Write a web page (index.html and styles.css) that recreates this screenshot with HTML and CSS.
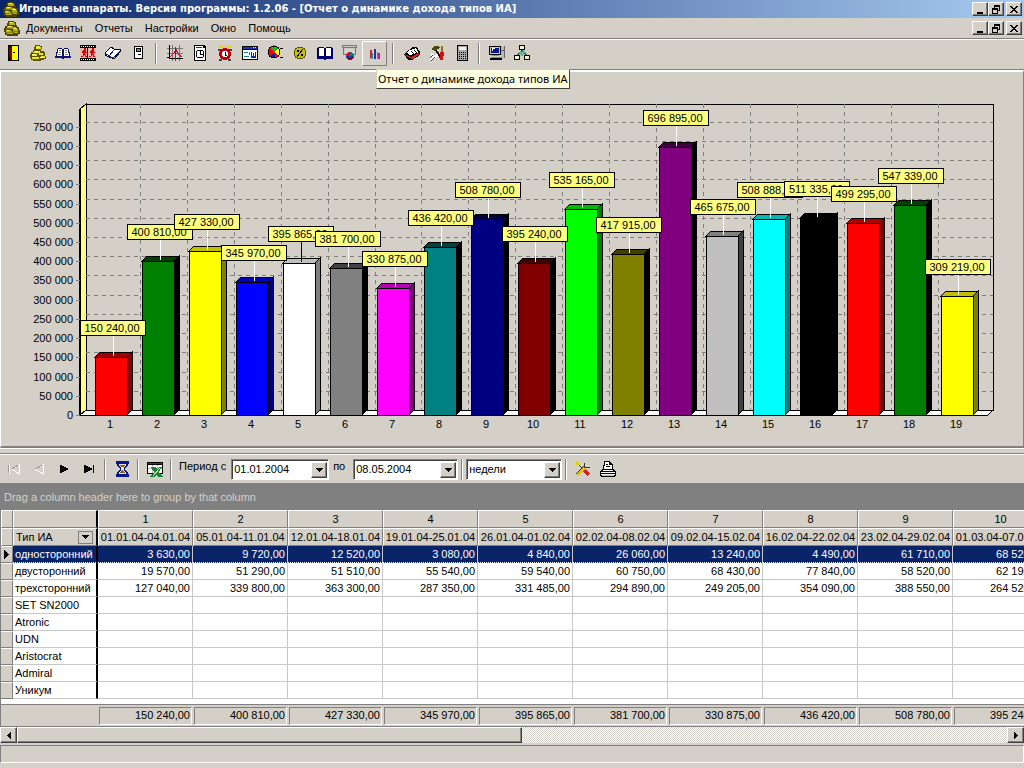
FILE: index.html
```html
<!DOCTYPE html>
<html lang="ru">
<head>
<meta charset="utf-8">
<title>Игровые аппараты</title>
<link rel="stylesheet" href="styles.css">
</head>
<body>
<svg class="defs" aria-hidden="true">
  <symbol id="coins" viewBox="0 0 16 16">
    <path d="M5 1h5v1h2v3h1v2h2v3h1v4h-2v2H3v-1H1v-3H0V8h1V6h2V3h1V1z" fill="#4a4600"/>
    <path d="M5 2h5v1h1v2H5zM3 6h6v1h3v1H3zM2 10h5v1h1v1H2zM9 8h4v1h1v2H9zM3 13h6v1H3zM10 12h4v1h-4z" fill="#b5ae1c"/>
    <path d="M6 2h3v1H6zM4 6h3v1H4zM10 8h3v1h-3zM3 10h2v1H3z" fill="#f4f07a"/>
    <path d="M2 8h7v1H2zM2 12h7v1H2zM9 11h5v1H9z" fill="#8c8610"/>
  </symbol>
  <symbol id="win-min" viewBox="0 0 10 9"><path d="M2 7h6v2H2z"/></symbol>
  <symbol id="win-restore" viewBox="0 0 10 9"><path d="M3 0h6v6H7V5h1V2H4v1H3zM1 3h6v6H1zM2 5v3h4V5z" fill-rule="evenodd"/></symbol>
  <symbol id="win-close" viewBox="0 0 10 9"><path d="M1 1h2v1h1v1h2V2h1V1h2v1H8v1H7v1H6v1h1v1h1v1h1v1H7V7H6V6H4v1H3v1H1V7h1V6h1V5h1V4H3V3H2V2H1z"/></symbol>
  <symbol id="down" viewBox="0 0 7 4"><path d="M0 0h7v1H6v1H5v1H4v1H3V3H2V2H1V1H0z"/></symbol>
</svg>

<div class="app">
  <header class="titlebar">
    <svg class="ico"><use href="#coins"/></svg>
    <h1 class="title">Игровые аппараты. Версия программы: 1.2.06 - [Отчет о динамике дохода типов ИА]</h1>
    <div class="winbtns">
      <button class="winbtn" aria-label="Свернуть"><svg><use href="#win-min"/></svg></button>
      <button class="winbtn" aria-label="Восстановить"><svg><use href="#win-restore"/></svg></button>
      <button class="winbtn winbtn-close" aria-label="Закрыть"><svg><use href="#win-close"/></svg></button>
    </div>
  </header>

  <nav class="menubar">
    <svg class="ico"><use href="#coins"/></svg>
    <button class="menu">Документы</button>
    <button class="menu">Отчеты</button>
    <button class="menu">Настройки</button>
    <button class="menu">Окно</button>
    <button class="menu">Помощь</button>
    <div class="winbtns">
      <button class="winbtn" aria-label="Свернуть документ"><svg><use href="#win-min"/></svg></button>
      <button class="winbtn" aria-label="Восстановить документ"><svg><use href="#win-restore"/></svg></button>
      <button class="winbtn winbtn-close" aria-label="Закрыть документ"><svg><use href="#win-close"/></svg></button>
    </div>
  </nav>

  <div class="toolbar">
    <button class="tool" aria-label="Выход"><svg class="ico" viewBox="0 0 16 16"><path d="M3 0h11v16H3z"/><path d="M7 1h6v14H7z" fill="#ff0"/><path d="M4 1h1v1h1v1h1v12H6v-1H5v-1H4z" fill="#800000"/><path d="M8 7h2v1H8z"/></svg></button>
    <button class="tool" aria-label="Касса"><svg class="ico" viewBox="0 0 16 16"><path d="M5 0h5v1h2v3h-1v2h3v1h1v4h1v3h-2v1h-3v1H3v-1H1v-2H0V9h1V7h2V5h1V2h1z" fill="#5c5600"/><path d="M6 1h4v1h1v2H6zM4 6h6v2H3zM2 9h5v2H2zM9 8h4v2H9zM2 12h7v2H2zM11 11h4v2h-4z" fill="#f0e61c"/><path d="M7 2h2v1H7zM5 6h2v1H5zM3 9h2v1H3zM10 12h3v1h-3z" fill="#fff"/></svg></button>
    <button class="tool" aria-label="Книга"><svg class="ico" viewBox="0 0 16 16"><path d="M3 3h4v1h2V3h4v1h1v3h1v4h1v2H9v1H7v-1H0v-2h1V7h1V4h1z" fill="#101070"/><path d="M3 4h4v7H2V8h1zM9 4h4v4h1v3H9z" fill="#fff"/><path d="M4 5h2v1H4zM4 7h2v1H4zM3 9h3v1H3zM10 5h2v1h-2zM10 7h2v1h-2zM10 9h3v1h-3z" fill="#888"/></svg></button>
    <button class="tool" aria-label="Движение"><svg class="ico" viewBox="0 0 16 16"><path d="M0 0h16v3H0zM0 13h16v3H0z"/><path d="M0 3h16v10H0z" fill="#e0b8b0"/><path d="M1 1h1v1H1zM3 1h1v1H3zM5 1h1v1H5zM7 1h1v1H7zM9 1h1v1H9zM11 1h1v1h-1zM13 1h1v1h-1zM1 14h1v1H1zM3 14h1v1H3zM5 14h1v1H5zM7 14h1v1H7zM9 14h1v1H9zM11 14h1v1h-1zM13 14h1v1h-1z" fill="#fff"/><path d="M4 3h2v2H4zM3 5h3v2h1v1H5v1h1v2h1v1H5v-2H4v1H3v1H1v-1h2V8H2V6h1zM12 3h2v2h-2zM11 5h3v2h1v1h-2v1h1v2h1v1h-2v-2h-1v1h-1v1H9v-1h2V8h-1V6h1z" fill="#e00000"/><path d="M7 3h1v10H7z"/></svg></button>
    <button class="tool" aria-label="Журнал"><svg class="ico" viewBox="0 0 16 16"><path d="M6 2l3 2 6 0 1 2-7 8-9-4v-2z" fill="#fff" stroke="#000"/><path d="M9 5L4 11M1 9l7 4 7-7" stroke="#102080" fill="none"/></svg></button>
    <button class="tool" aria-label="Терминал"><svg class="ico" viewBox="0 0 16 16"><path d="M4 1h9v13H4z"/><path d="M5 2h7v11H5z" fill="#fff"/><path d="M6 3h5v4H6zM8 9h3v1H8z"/><path d="M7 4h3v2H7z" fill="#888"/></svg></button>
    <span class="sep"></span>
    <button class="tool" aria-label="График"><svg class="ico" viewBox="0 0 16 16"><path d="M0 3h16v1H0zM0 8h16v1H0zM5 0h1v16H5zM12 0h1v16h-1z" fill="#777"/><path d="M2 0h1v13h13v1H2zM0 12h2v1H0z"/><path d="M3 11h1v-1h1V9h1V8h1V6h1V4h2v2h1v2h1v1h1v1h1v1h1v1h-2v-1h-1v-1h-1V9h-1V7H9V6H8v2H7v1H6v1H5v1H4v1H3z" fill="#c01040"/><path d="M8 2h1v14H8z" fill="#3030b0"/></svg></button>
    <button class="tool" aria-label="Отчет по времени"><svg class="ico" viewBox="0 0 16 16"><path d="M2 0h10l2 2v14H2z"/><path d="M3 1h8v2h2v12H3z" fill="#fff"/><path d="M4 2h6v1H4z" fill="#c00000"/><circle cx="8" cy="9" r="4" fill="#fff" stroke="#000"/><path d="M8 6v3h3" stroke="#000" fill="none"/></svg></button>
    <button class="tool" aria-label="Будильник"><svg class="ico" viewBox="0 0 16 16"><path d="M2 0h1v1h2V0h1v2h2V0h1v2h2V0h1v1h2v2H2z" fill="#e6d800"/><path d="M1 4h4v2H1zM11 4h4v2h-4zM2 14h3v2H2zM11 14h3v2h-3z" fill="#444"/><circle cx="8" cy="9" r="6" fill="#c00000"/><circle cx="8" cy="9" r="3" fill="#fff"/><path d="M8 7v3h2" stroke="#000" fill="none"/></svg></button>
    <button class="tool" aria-label="Форма"><svg class="ico" viewBox="0 0 16 16"><path d="M0 1h16v14H0z"/><path d="M1 5h14v9H1z" fill="#fff"/><path d="M1 2h14v2H1z" fill="#1838b8"/><path d="M11 2h1v1h-1zM13 2h1v1h-1z" fill="#fff"/><path d="M2 7h4v1H2zM7 7h1v3H7zM2 11h5v1H2z" fill="#108080"/><path d="M9 7h1v4h1V8h1v3h1V7h1v6H9z" fill="#2020a0"/></svg></button>
    <button class="tool" aria-label="Диаграмма"><svg class="ico" viewBox="0 0 16 16"><circle cx="7" cy="7" r="6" fill="#f00"/><path d="M7 7L3 2a6 6 0 0 1 9 1z" fill="#00c030"/><path d="M7 7l5-4a6 6 0 0 1 0 8z" fill="#ff0"/><path d="M7 7l2 6a6 6 0 0 1-6-2z" fill="#1020a0"/><circle cx="7" cy="7" r="6" fill="none" stroke="#000"/><path d="M13 3h3M13 12h3"  stroke="#000"/></svg></button>
    <button class="tool" aria-label="Проценты"><svg class="ico" viewBox="0 0 16 16"><circle cx="8" cy="8" r="6" fill="#c2bb18" stroke="#5c5600"/><path d="M11 4l-6 8" stroke="#000"/><path d="M5 5h2v2H5zM9 9h2v2H9z"/></svg></button>
    <button class="tool" aria-label="Справочник"><svg class="ico" viewBox="0 0 16 16"><path d="M1 2h6v1h2V2h6v1h1v11H9v1H7v-1H0V3h1z" fill="#000070"/><path d="M2 3h5v8H2zM9 3h5v8H9z" fill="#fff"/><path d="M8 3v11" stroke="#000"/></svg></button>
    <button class="tool" aria-label="Презентация"><svg class="ico" viewBox="0 0 16 16"><path d="M0 0h15v3h-1v7H1V3H0z" fill="#777"/><path d="M2 3h11v6H2zM1 1h13v1H1z" fill="#c8c8c8"/><path d="M3 4h9v4H3z" fill="#d8d4cc"/><circle cx="8" cy="11" r="4" fill="#1838a8"/><path d="M8 11V7a4 4 0 0 1 4 4z" fill="#108060"/><path d="M8 11H4a4 4 0 0 1 4-4z" fill="#d01020"/><path d="M5 13h6v1H5z" fill="#700020"/></svg></button>
    <button class="tool tool-on" aria-label="Отчет о динамике дохода типов ИА" aria-describedby="tip"><svg class="ico" viewBox="0 0 16 16"><path d="M3 5h2v9H3z" fill="#d02030"/><path d="M5 8h1v6H5z" fill="#209090"/><path d="M7 4h2v10H7z" fill="#2828a8"/><path d="M10 7h1v7h-1z" fill="#20a0d0"/><path d="M11 8h2v6h-2z" fill="#b020a0"/><path d="M2 13h3v1H2z" fill="#e09090"/></svg><span class="tip" id="tip" role="tooltip">Отчет о динамике дохода типов ИА</span></button>
    <span class="sep"></span>
    <button class="tool" aria-label="Картотека"><svg class="ico" viewBox="0 0 16 16"><path d="M0 9l9-7h4l3 5v3l-8 5H4z"/><path d="M1 9l6 3 8-4v2l-7 4-6-3z" fill="#d02020"/><path d="M3 8l3-4 3 5-3 1zM7 5l2-2 3 5-2 1zM10 4l2-1 2 4-1 1z" fill="#fff"/></svg></button>
    <button class="tool" aria-label="Инструменты"><svg class="ico" viewBox="0 0 16 16"><path d="M2 4l3-3h5l1 2-3 1-1 2H5L4 5z" fill="#444a10"/><path d="M7 5l6 10" stroke="#111" stroke-width="2"/><path d="M3 8v3l2 2 3-3M1 15l4-4" stroke="#fff" stroke-width="2" fill="none"/><path d="M1 13l3-3M2 16l4-4" stroke="#333"/><path d="M13 1v7" stroke="#907010" stroke-width="2"/><path d="M11 7h4v4h-1v4h-3z" fill="#d01010"/></svg></button>
    <button class="tool" aria-label="Калькулятор"><svg class="ico" viewBox="0 0 16 16"><path d="M3 0h11v16H3z"/><path d="M4 1h9v14H4z" fill="#a8a8a8"/><path d="M5 2h7v3H5z" fill="#e8f0f0"/><path d="M5 7h1v1H5zM7 7h1v1H7zM9 7h1v1H9zM11 7h1v1h-1zM5 9h1v1H5zM7 9h1v1H7zM9 9h1v1H9zM11 9h1v1h-1zM5 11h1v1H5zM7 11h1v1H7zM9 11h1v1H9zM11 11h1v1h-1zM5 13h1v1H5zM7 13h1v1H7zM9 13h1v1H9zM11 13h1v1h-1z"/></svg></button>
    <span class="sep sep-tight"></span>
    <button class="tool" aria-label="Компьютер"><svg class="ico" viewBox="0 0 16 16"><path d="M0 1h12v9H0zM1 13h12v2H1z"/><path d="M1 2h10v7H1z" fill="#c8c8c8"/><path d="M2 3h8v5H2z" fill="#001890"/><path d="M3 3h3v1H4v2H3z" fill="#fff"/><path d="M12 1h4v12h-4z" fill="#b8b8b8"/><path d="M15 1h1v12h-1zM12 5h3v1h-3z" fill="#666"/><path d="M3 10h7v1H3zM2 12h11v1H2z" fill="#888"/></svg></button>
    <button class="tool" aria-label="Структура"><svg class="ico" viewBox="0 0 16 16"><path d="M8 4l4 4-4 3-4-3z" fill="#70b0a0"/><path d="M7 5h2v2H7zM4 8h2v1H5v1H3V9h1zM10 8h2v1h1v1h-2V9h-1z" fill="#207060"/><path d="M5 0h6v5H5zM0 10h6v5H0zM10 10h6v5h-6z"/><path d="M6 1h4v3H6zM1 11h4v3H1zM11 11h4v3h-4z" fill="#f4f4c0"/></svg></button>
  </div>

  <main class="chart-pane">
    <svg class="chart" id="chart" viewBox="0 0 1022 374" role="img" aria-label="Динамика дохода по неделям"></svg>
  </main>

  <div class="splitter"></div>

  <form class="toolbar toolbar-grid">
    <button type="button" class="tool" aria-label="Первая" disabled><svg class="ico" viewBox="0 0 16 16"><path d="M3 4v9M13 4v9L6 8z" stroke="#fff" fill="none"/><path d="M2 4v8M12 4L6 8" stroke="#999" fill="none"/></svg></button>
    <button type="button" class="tool" aria-label="Предыдущая" disabled><svg class="ico" viewBox="0 0 16 16"><path d="M12 4v9L4 8z" stroke="#fff" fill="none"/><path d="M11 4L4 8" stroke="#999"/></svg></button>
    <button type="button" class="tool" aria-label="Следующая"><svg class="ico" viewBox="0 0 16 16"><path d="M4 4h2v1h2v1h2v1h2v2h-2v1H8v1H6v1H4z"/></svg></button>
    <button type="button" class="tool" aria-label="Последняя"><svg class="ico" viewBox="0 0 16 16"><path d="M3 4h2v1h2v1h2v1h2v2H9v1H7v1H5v1H3zM12 4h1v8h-1z"/></svg></button>
    <span class="sep"></span>
    <button type="button" class="tool" aria-label="Рассчитать"><svg class="ico" viewBox="0 0 16 16"><path d="M2 0h13v3h-1v2h-1v1h-1v1h-1v2h1v1h1v1h1v2h1v3H2v-3h1v-2h1v-1h1V9h1V7H5V6H4V5H3V3H2z" fill="#001890"/><path d="M5 3h7v2h-1v1h-1v4h1v1h1v2H5v-2h1v-1h1V6H6V5H5z" fill="#f0e0b0"/><path d="M6 4h5v1h-1v1H7V5H6zM8 9h1v1h1v1h1v1H6v-1h1v-1h1z" fill="#806020"/></svg></button>
    <span class="sep"></span>
    <button type="button" class="tool" aria-label="Экспорт в Excel"><svg class="ico" viewBox="0 0 16 16"><path d="M0 1h16v12H0z"/><path d="M1 4h14v8H1z" fill="#fff"/><path d="M1 2h14v1H1z" fill="#1838b8"/><path d="M5 4v8M10 4v8M1 7h14" stroke="#bbb"/><path d="M4 6h4l2 2 2-2h3l-3 5 4 5h-5l-2-2-2 2H3l4-5z" fill="#208030"/><path d="M13 7l-7 8" stroke="#b0e0b0"/></svg></button>
    <span class="sep"></span>
    <label class="lbl" for="from">Период с</label>
    <span class="combo combo-date"><input id="from" type="text" value="01.01.2004"><button type="button" class="drop" aria-label="Выбрать начало"><svg class="arrow"><use href="#down"/></svg></button></span>
    <label class="lbl" for="to">по</label>
    <span class="combo combo-to"><input id="to" type="text" value="08.05.2004"><button type="button" class="drop" aria-label="Выбрать конец"><svg class="arrow"><use href="#down"/></svg></button></span>
    <span class="sep"></span>
    <span class="combo combo-unit"><select aria-label="Единица периода"><option>недели</option></select><span class="drop"><svg class="arrow"><use href="#down"/></svg></span></span>
    <span class="sep"></span>
    <button type="button" class="tool" aria-label="Настройка"><svg class="ico" viewBox="0 0 16 16"><path d="M2 2l12 12" stroke="#333" stroke-width="1"/><path d="M9 9l5 5" stroke="#d02020" stroke-width="3"/><path d="M2 14l7-7" stroke="#e0c800" stroke-width="3"/><path d="M1 13l8-8M10 2l-1 4 3 1 3-1" stroke="#333" fill="none"/><path d="M1 1h3v3H1z" fill="#e0d000"/></svg></button>
    <button type="button" class="tool" aria-label="Печать"><svg class="ico" viewBox="0 0 16 16"><path d="M4 0h6v1h1v1h1v1h1v5h1v1h1v1h1v5h-1v1H1v-1H0v-5h1V9h1V8h1V4h1z"/><path d="M5 1h4v3h3v4H4V5h1zM3 9h10v1H3zM1 11h14v1H1zM1 13h14v1H1z" fill="#fff"/><path d="M6 3h2v1H6zM6 5h4v1H6z"/><path d="M2 14h12v1H2z" fill="#bbb"/></svg></button>
  </form>

  <section class="grid">
    <p class="groupbar">Drag a column header here to group by that column</p>
    <div class="grid-view">
      <table class="data">
        <colgroup><col class="c-ind"><col class="c-name"><col span="10" class="c-val"></colgroup>
        <thead>
          <tr><th></th><th></th><th>1</th><th>2</th><th>3</th><th>4</th><th>5</th><th>6</th><th>7</th><th>8</th><th>9</th><th>10</th></tr>
          <tr><th></th><th><span class="filter">Тип ИА<button class="filter-btn" aria-label="Фильтр"><svg class="arrow"><use href="#down"/></svg></button></span></th><th>01.01.04-04.01.04</th><th>05.01.04-11.01.04</th><th>12.01.04-18.01.04</th><th>19.01.04-25.01.04</th><th>26.01.04-01.02.04</th><th>02.02.04-08.02.04</th><th>09.02.04-15.02.04</th><th>16.02.04-22.02.04</th><th>23.02.04-29.02.04</th><th>01.03.04-07.03.04</th></tr>
        </thead>
        <tbody>
          <tr class="sel"><td><svg class="mark" viewBox="0 0 5 9"><path d="M0 0h1v1h1v1h1v1h1v1h1v1H4v1H3v1H2v1H1v1H0z"/></svg></td><td>односторонний</td><td>3 630,00</td><td>9 720,00</td><td>12 520,00</td><td>3 080,00</td><td>4 840,00</td><td>26 060,00</td><td>13 240,00</td><td>4 490,00</td><td>61 710,00</td><td>68 520,00</td></tr>
          <tr><td></td><td>двусторонний</td><td>19 570,00</td><td>51 290,00</td><td>51 510,00</td><td>55 540,00</td><td>59 540,00</td><td>60 750,00</td><td>68 430,00</td><td>77 840,00</td><td>58 520,00</td><td>62 190,00</td></tr>
          <tr><td></td><td>трехсторонний</td><td>127 040,00</td><td>339 800,00</td><td>363 300,00</td><td>287 350,00</td><td>331 485,00</td><td>294 890,00</td><td>249 205,00</td><td>354 090,00</td><td>388 550,00</td><td>264 520,00</td></tr>
          <tr><td></td><td>SET SN2000</td><td></td><td></td><td></td><td></td><td></td><td></td><td></td><td></td><td></td><td></td></tr>
          <tr><td></td><td>Atronic</td><td></td><td></td><td></td><td></td><td></td><td></td><td></td><td></td><td></td><td></td></tr>
          <tr><td></td><td>UDN</td><td></td><td></td><td></td><td></td><td></td><td></td><td></td><td></td><td></td><td></td></tr>
          <tr><td></td><td>Aristocrat</td><td></td><td></td><td></td><td></td><td></td><td></td><td></td><td></td><td></td><td></td></tr>
          <tr><td></td><td>Admiral</td><td></td><td></td><td></td><td></td><td></td><td></td><td></td><td></td><td></td><td></td></tr>
          <tr><td></td><td>Уникум</td><td></td><td></td><td></td><td></td><td></td><td></td><td></td><td></td><td></td><td></td></tr>
        </tbody>
        <tfoot>
          <tr class="gap"><td colspan="12"></td></tr>
          <tr class="sum"><td colspan="2"></td><td><span>150 240,00</span></td><td><span>400 810,00</span></td><td><span>427 330,00</span></td><td><span>345 970,00</span></td><td><span>395 865,00</span></td><td><span>381 700,00</span></td><td><span>330 875,00</span></td><td><span>436 420,00</span></td><td><span>508 780,00</span></td><td><span>395 240,00</span></td></tr>
        </tfoot>
      </table>
    </div>
    <div class="scroll">
      <button class="scroll-btn" aria-label="Влево"><svg viewBox="0 0 4 7"><path d="M3 0h1v7H3V6H2V5H1V4H0V3h1V2h1V1h1z"/></svg></button>
      <div class="scroll-track"><div class="scroll-thumb"></div></div>
      <button class="scroll-btn" aria-label="Вправо"><svg viewBox="0 0 4 7"><path d="M1 0H0v7h1V6h1V5h1V4h1V3H3V2H2V1H1z"/></svg></button>
    </div>
  </section>

  <footer class="statusbar"></footer>
</div>
<script src="chart.js"></script>
</body>
</html>
```
FILE: styles.css
```css
* { box-sizing: border-box; }

body {
  margin: 0;
  background: #d4d0c8;
  color: #000;
  font: 11px/13px "Liberation Sans", Arial, sans-serif;
}

button, input, select {
  margin: 0;
  padding: 0;
  border: 0;
  border-radius: 0;
  background: none;
  color: inherit;
  font: inherit;
}

.defs { position: absolute; width: 0; height: 0; }

.app {
  display: flex;
  flex-direction: column;
  min-height: 100vh;
  overflow: hidden;
}

.ico {
  display: block;
  flex: none;
  width: 16px;
  height: 16px;
  shape-rendering: crispEdges;
}

/* Title and menu */
.titlebar {
  display: flex;
  align-items: center;
  height: 18px;
  padding: 0 2px 0 3px;
  background: linear-gradient(90deg, #0a246a, #a6caf0);
  color: #fff;
}

.title {
  flex: 1;
  margin: 0;
  font: bold 10px/16px "DejaVu Sans", sans-serif;
  white-space: nowrap;
}

.winbtns { display: flex; margin-left: auto; }

.winbtn {
  display: flex;
  align-items: center;
  justify-content: center;
  width: 16px;
  height: 14px;
  background: #d4d0c8;
  border: 1px solid;
  border-color: #fff #404040 #404040 #fff;
  box-shadow: inset -1px -1px #808080;
}

.winbtn svg { width: 10px; height: 9px; shape-rendering: crispEdges; }
.winbtn-close { margin-left: 2px; }

.menubar {
  display: flex;
  align-items: center;
  height: 21px;
  padding: 0 2px 0 4px;
  border-bottom: 1px solid #808080;
}

.menu { padding: 0 6px; }

/* Toolbars */
.toolbar {
  display: flex;
  align-items: center;
  height: 31px;
  padding-bottom: 3px;
  border-top: 1px solid #fff;
  border-bottom: 1px solid #808080;
}

.tool {
  position: relative;
  display: flex;
  flex: none;
  align-items: center;
  justify-content: center;
  width: 25px;
  height: 25px;
}

.tool-on { border: 1px solid; border-color: #fff #808080 #808080 #fff; }

.tip {
  position: absolute;
  z-index: 1;
  top: 27px;
  left: 13px;
  padding: 2px 1px;
  border: 1px solid;
  border-color: #d4d0c8 #404040 #404040 #d4d0c8;
  background: #ffffe1;
  font: 11px/14px "Noto Sans", sans-serif;
  white-space: nowrap;
}

.sep {
  flex: none;
  width: 2px;
  height: 21px;
  margin: 0 5px;
  border-left: 1px solid #808080;
  border-right: 1px solid #fff;
}

.sep-tight { margin: 0 4px; }

.toolbar-grid { height: 30px; padding: 0 0 0 1px; }
.toolbar-grid .sep { margin: 0 3px; }

.lbl { flex: none; padding: 0 5px 6px 4px; }

.combo {
  display: flex;
  flex: none;
  height: 21px;
  border: 1px solid;
  border-color: #808080 #fff #fff #808080;
  box-shadow: inset 1px 1px #404040;
  background: #fff;
  padding: 2px 1px 1px 2px;
}

.combo-date { width: 98px; }
.combo-to { width: 105px; margin-left: 3px; }
.combo-unit { width: 96px; }

.combo input, .combo select {
  flex: 1;
  min-width: 0;
  appearance: none;
  outline: 0;
}

.drop {
  display: flex;
  flex: none;
  align-items: center;
  justify-content: center;
  width: 16px;
  background: #d4d0c8;
  border: 1px solid;
  border-color: #fff #404040 #404040 #fff;
  box-shadow: inset -1px -1px #808080;
}

.arrow { width: 7px; height: 4px; shape-rendering: crispEdges; }

/* Chart */
.chart-pane {
  border: solid;
  border-width: 2px 1px 2px;
  border-color: #fff #808080 #808080 #fff;
}

.chart { display: block; width: 100%; height: auto; font-size: 11px; }
.chart .shape { stroke: #000; shape-rendering: crispEdges; }
.chart .dash { stroke: #808080; stroke-dasharray: 4 4; shape-rendering: crispEdges; }
.chart .tick { stroke: #808080; shape-rendering: crispEdges; }
.chart .lead { stroke: #fff; shape-rendering: crispEdges; }
.chart .lead-dark { stroke: #000; }
.chart .note { fill: #ffff80; }

.splitter {
  height: 6px;
  border-top: 1px solid #fff;
  border-bottom: 1px solid #808080;
}

/* Grid */
.groupbar {
  margin: 0;
  height: 26px;
  padding: 7px 4px 0;
  background: #808080;
  color: #d4d0c8;
}

.grid-view { overflow: hidden; background: #fff; border-left: 1px solid #808080; }

.data {
  width: 1047px;
  table-layout: fixed;
  border-collapse: separate;
  border-spacing: 0;
}

.c-ind { width: 12px; }
.c-name { width: 85px; }
.c-val { width: 95px; }

.data th, .data td { padding: 0; overflow: hidden; white-space: nowrap; }

.data th {
  height: 18px;
  background: #d4d0c8;
  border: 1px solid;
  border-color: #fff #808080 #808080 #fff;
  font-weight: normal;
  text-align: center;
}

.data tbody td {
  height: 17px;
  border-right: 1px solid #c8c8c8;
  border-bottom: 1px solid #c8c8c8;
  padding-right: 2px;
  text-align: right;
}

.data tbody td:first-child {
  background: #d4d0c8;
  border-top: 1px solid #fff;
  border-color: #fff #808080 #808080;
  padding: 0;
}

.data tbody td:nth-child(2) { padding: 0 0 0 2px; text-align: left; }

.data thead th:nth-child(2), .data tbody td:nth-child(2) { border-right: 2px solid #000; }

.data .sel td:not(:first-child) {
  background: #0a246a;
  color: #fff;
  border-bottom: 1px dotted #fff;
}

.mark { display: block; width: 5px; height: 9px; margin: 0 auto 0 3px; shape-rendering: crispEdges; }

.filter {
  display: flex;
  align-items: center;
  justify-content: space-between;
  padding: 0 3px 0 2px;
}

.filter-btn {
  display: flex;
  align-items: center;
  justify-content: center;
  width: 15px;
  height: 13px;
  border: 1px solid #808080;
}

.data .gap td { height: 6px; border-bottom: 1px solid #808080; }
.data .sum td { height: 21px; background: #d4d0c8; padding: 2px 1px 1px; }

.sum span {
  display: block;
  height: 18px;
  padding: 1px 1px 0;
  border: 1px solid;
  border-color: #808080 #fff #fff #808080;
  text-align: right;
}

.scroll { display: flex; height: 17px; border-top: 1px solid #808080; }

.scroll-btn, .scroll-thumb {
  background: #d4d0c8;
  border: 1px solid;
  border-color: #fff #404040 #404040 #fff;
  box-shadow: inset -1px -1px #808080;
}

.scroll-btn {
  display: flex;
  flex: none;
  align-items: center;
  justify-content: center;
  width: 17px;
}

.scroll-btn svg { width: 4px; height: 7px; shape-rendering: crispEdges; }

.scroll-track {
  flex: 1;
  background: repeating-conic-gradient(#fff 0 25%, #d4d0c8 0 50%) 0 0 / 2px 2px;
}

.scroll-thumb { width: 51%; height: 100%; }

.statusbar {
  height: 18px;
  margin-top: 2px;
  border: 1px solid;
  border-color: #808080 #fff #fff #808080;
}
```
FILE: chart.js
```js
// value, face, top, side
const bars = [
  [150240, "#f00", "#a00000", "#800000"],
  [400810, "#008000", "#004000", "#000"],
  [427330, "#ff0", "#c0c000", "#808000"],
  [345970, "#00f", "#0000b8", "#000080"],
  [395865, "#fff", "#c0c0c0", "#808080"],
  [381700, "#808080", "#404040", "#000"],
  [330875, "#f0f", "#b800b8", "#800080"],
  [436420, "#008080", "#004040", "#000"],
  [508780, "#000080", "#000040", "#000"],
  [395240, "#800000", "#400000", "#000"],
  [535165, "#0f0", "#00b800", "#008000"],
  [417915, "#808000", "#404000", "#000"],
  [696895, "#800080", "#400040", "#000"],
  [465675, "#c0c0c0", "#808080", "#404040"],
  [508888, "#0ff", "#00b8b8", "#008080"],
  [511335, "#000", "#000", "#000"],
  [499295, "#f00", "#b00000", "#800000"],
  [547339, "#008000", "#004000", "#000"],
  [309219, "#ff0", "#c0c000", "#808000"]
];

const svg = document.getElementById("chart");
const NS = "http://www.w3.org/2000/svg";
const base = 343, left = 79, right = 992, depth = 5, roof = 32;
const step = 46.95;
const y = v => Math.round(base - v * 0.0003845);

function add(name, attrs, text) {
  const el = document.createElementNS(NS, name);
  for (const k in attrs) el.setAttribute(k, attrs[k]);
  if (text !== undefined) el.textContent = text;
  svg.append(el);
}
const poly = (points, fill, cls = "shape") => add("polygon", { points, fill, class: cls });
const line = (x1, y1, x2, y2, cls) => add("line", { x1, y1, x2, y2, class: cls });
const money = v => String(v).replace(/(\d{3})$/, " $1");

// walls and floor
poly(`${left},${roof + 5} ${left + 6},${roof} ${left + 6},${base - depth} ${left},${base}`, "#ffff80");
poly(`${left},${base} ${left + 6},${base - depth} ${right},${base - depth} ${right - 5},${base}`, "#fff");
add("rect", { x: left + 6, y: roof, width: right - left - 6, height: base - depth - roof, fill: "none", class: "shape" });
add("rect", { x: left - 1, y: roof + 5, width: 2, height: base - roof - 5 });

for (let v = 0; v <= 750000; v += 50000) {
  const py = y(v);
  if (v) line(left + 6, py - depth + 0.5, right, py - depth + 0.5, "dash");
  line(left - 4, py + 0.5, left, py + 0.5, "tick");
  add("text", { x: left - 7, y: py + 4, "text-anchor": "end" }, v ? money(v) : "0");
}
for (let i = 1; i < bars.length; i++) {
  const px = Math.round(91.8 + step * i) + 0.5;
  line(px, roof, px, base - depth, "dash");
}

bars.forEach(([v, face, top, side], i) => {
  const x = Math.round(94.4 + step * i), t = y(v), w = 32;
  poly(`${x},${t} ${x + 5},${t - 5} ${x + w + 5},${t - 5} ${x + w},${t}`, top);
  poly(`${x + w},${t} ${x + w + 5},${t - 5} ${x + w + 5},${base - 5} ${x + w},${base}`, side);
  add("rect", { x, y: t, width: w, height: base - t, fill: face, class: "shape" });
  add("text", { x: x + 15, y: 356, "text-anchor": "middle" }, i + 1);
});

bars.forEach(([v, face], i) => {
  const x = Math.round(78.8 + step * i), t = y(v);
  line(x + 33, t - 22, x + 33, t - 1, face === "#fff" ? "lead lead-dark" : "lead");
  add("rect", { x, y: t - 37, width: 65, height: 15, class: "shape note" });
  add("text", { x: x + 32, y: t - 25, "text-anchor": "middle" }, money(v) + ",00");
});
```
